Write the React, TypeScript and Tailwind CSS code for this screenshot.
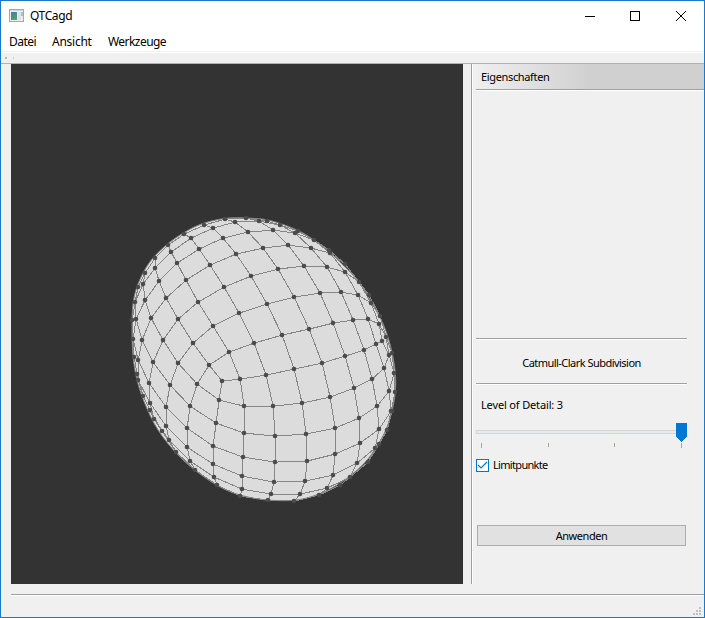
import React from "react";

type Pt = [number, number];

// Grid rows of the upper face, from the front corner towards the back.
const upper: Pt[][] = [
  [[222,381],[240,379],[266,375],[294,369],[322,363],[345,356],[364,350],[376,344],[382,341]],
  [[209,365],[229,352],[254,343],[282,335],[309,329],[333,323],[353,320],[368,319],[379,324]],
  [[193,343],[213,326],[239,313],[267,304],[294,297],[320,293],[341,292],[358,295],[371,303]],
  [[178,319],[198,302],[224,287],[251,276],[278,269],[304,266],[327,267],[345,272],[359,282]],
  [[166,298],[186,280],[210,265],[236,254],[263,248],[288,245],[311,248],[330,253],[345,264]],
  [[159,281],[177,263],[199,249],[223,238],[248,232],[273,230],[295,233],[314,240],[329,250]],
  [[155,268],[171,252],[191,238],[213,228],[235,222],[259,221],[280,225],[298,231],[314,240]],
  [[155,258],[168,245],[184,234],[204,225],[225,219],[246,218],[267,221],[280,225],[298,231]],
];

// Columns of the left face, starting at its lower seam.
const left: Pt[][] = [
  [[222,381],[209,365],[193,343],[178,319],[166,298],[159,281],[155,268],[155,258]],
  [[219,400],[197,384],[178,363],[163,340],[151,318],[145,300],[143,284],[145,273]],
  [[216,423],[190,406],[170,385],[153,362],[142,340],[136,319],[135,302],[138,287]],
  [[213,446],[187,428],[166,407],[149,383],[138,360],[133,339],[132,320],[135,302]],
  [[213,464],[187,447],[166,426],[150,403],[138,380],[134,357],[133,339],[132,320]],
  [[214,477],[190,461],[169,440],[154,419],[143,396],[137,374],[134,357],[133,339]],
  [[217,485],[195,470],[176,452],[162,431],[150,410],[143,396],[137,374],[134,357]],
];

// Rows of the lower face, starting at the upper seam.
const lower: Pt[][] = [
  [[222,381],[240,379],[266,375],[294,369],[322,363],[345,356],[364,350],[376,344],[382,341]],
  [[219,400],[244,406],[273,406],[302,403],[330,397],[354,388],[372,379],[384,368],[389,355]],
  [[216,423],[244,433],[275,436],[306,434],[335,428],[359,418],[377,406],[389,391],[394,373]],
  [[213,446],[243,457],[275,462],[307,461],[335,454],[360,443],[379,429],[391,411],[395,392]],
  [[213,464],[242,476],[274,482],[305,481],[333,475],[357,463],[375,448],[387,430],[392,411]],
  [[214,477],[242,489],[271,494],[300,494],[327,488],[350,477],[368,462],[379,444],[387,430]],
  [[217,485],[240,496],[268,500],[294,501],[319,495],[340,485],[350,477],[368,462],[379,444]],
];

// Foreshortened columns along the right edge.
const right: Pt[][] = [
  [[382,341],[379,324],[371,303],[359,282],[345,264],[329,250],[314,240]],
  [[389,355],[386,337],[380,316],[369,295],[359,282],[345,264],[329,250]],
  [[394,373],[392,353],[386,337],[380,316],[369,295],[359,282],[345,264]],
];

const outline: Pt[] = [
  [132,330],[133,304],[138,284],[149,263],[164,247],[180,235],[200,224.5],[224,218.5],[246,218],
  [270,220.5],[298,230.5],[318,243],[337,259],[358,281],[372,303],[384,326],[391,348],[395,370],
  [395.5,390],[392,411],[384,434],[368,459],[348,477.5],[325,491.5],[300,499.5],[275,500.5],[250,497.5],
  [225,489.5],[200,474],[178,455],[158,430],[145,404],[137,380],[133,356],
];

function smoothClosed(p: Pt[]): string {
  const n = p.length;
  let d = `M${p[0][0]} ${p[0][1]}`;
  for (let i = 0; i < n; i++) {
    const a = p[(i + n - 1) % n], b = p[i], c = p[(i + 1) % n], e = p[(i + 2) % n];
    d += `C${b[0] + (c[0] - a[0]) / 6} ${b[1] + (c[1] - a[1]) / 6} ${c[0] - (e[0] - b[0]) / 6} ${c[1] - (e[1] - b[1]) / 6} ${c[0]} ${c[1]}`;
  }
  return d + "Z";
}

function gridPath(grid: Pt[][]): string {
  const line = (l: Pt[]) => "M" + l.map((q) => q.join(" ")).join("L");
  const across = grid[0].map((_, j) => line(grid.map((r) => r[j])));
  return grid.map(line).join("") + across.join("");
}

const faces = [upper, left, lower, right];
const vertices = Array.from(new Set(faces.flat(2).map((p) => p.join(",")))).map(
  (s) => s.split(",").map(Number) as Pt,
);

function Mesh() {
  return (
    <svg className="block h-full w-full" viewBox="11 64 452 520">
      <path d={smoothClosed(outline)} fill="#dcdcdc" stroke="#808080" strokeWidth="1" />
      <g fill="none" stroke="#868686" shapeRendering="crispEdges" transform="translate(.1 .1)">
        {faces.map((f, i) => <path key={i} d={gridPath(f)} />)}
      </g>
      <g fill="#4b4b4b">
        {vertices.map(([x, y]) => <circle key={`${x},${y}`} cx={x} cy={y} r="2.3" />)}
      </g>
    </svg>
  );
}

function Rule() {
  return <div className="h-[2px] w-[211px] border-b border-white bg-[#a0a0a0]" />;
}

function TitleBar() {
  return (
    <div className="flex h-[29px] items-center bg-white pl-2">
      <svg className="h-[14px] w-[16px]" viewBox="0 0 16 14" shapeRendering="crispEdges">
        <defs>
          <linearGradient id="pane" x1="0" y1="0" x2="0.4" y2="1">
            <stop offset="0" stopColor="#4c7d9a" />
            <stop offset="1" stopColor="#48a078" />
          </linearGradient>
        </defs>
        <rect x=".5" y=".5" width="14" height="12" fill="#eeeeee" stroke="#a4a8ac" />
        <rect x="1" y="1" width="13" height="1" fill="#d4d8dc" />
        <rect x="2" y="3" width="6" height="8" fill="url(#pane)" />
        <rect x="9" y="3" width="3" height="8" fill="#dfe2e5" />
        <rect x="12" y="3" width="2" height="4" fill="#9fc7c9" />
      </svg>
      <span className="ml-[5px] text-[12px] leading-4 tracking-[-0.4px]">QTCagd</span>
      <svg className="ml-auto h-[12px] w-[103px]" viewBox="584 9 103 12" fill="none" stroke="#000">
        <path d="M585 15.5h10M630.5 10.5h9v9h-9z" shapeRendering="crispEdges" />
        <path d="M676 10l10 10M686 10l-10 10" />
      </svg>
      <div className="w-[17px]" />
    </div>
  );
}

export default function App() {
  return (
    <div className="flex h-[618px] w-[705px] flex-col overflow-hidden border border-[#1979ca] bg-[#f0f0f0] font-['Noto_Sans',sans-serif] text-black">
      <TitleBar />
      <div className="flex h-[21px] items-center bg-white pt-[2px] pl-2 text-[12px] leading-4">
        <span className="w-[43px] tracking-[-0.5px]">Datei</span>
        <span className="w-[56px] tracking-[-0.25px]">Ansicht</span>
        <span className="tracking-[-0.55px]">Werkzeuge</span>
      </div>
      <div className="h-[2px] border-b border-white bg-[#f0f0f0]" />
      <div className="flex h-[11px] gap-[6px] border-b border-[#b2b2b2] pt-[4px] pl-[4px]">
        <div className="h-[2px] w-[2px] bg-[#b8b8b8]" />
        <div className="h-[2px] w-px bg-[#d0d0d0]" />
      </div>
      <div className="flex h-[520px]">
        <div className="ml-[10px] h-full w-[452px] bg-[#333333]"><Mesh /></div>
        <div className="ml-[8px] w-[2px] border-r border-white bg-[#a0a0a0]" />
        <div className="flex flex-1 flex-col text-[11px] leading-4">
          <div className="h-[27px] bg-[linear-gradient(90deg,#f0f0f0,#d0d0d0_118px)] pl-[3px]">
            <div className="h-[26px] border-b border-[#a0a0a0] pt-[5px] pl-[5px]">
              <span className="tracking-[-0.35px]">Eigenschaften</span>
            </div>
            <div className="h-px bg-white" />
          </div>
          <div className="flex flex-col pl-[3px]">
            <div className="h-[247px]" />
            <Rule />
            <div className="flex h-[43px] w-[211px] items-center justify-center pt-[2px] tracking-[-0.53px]">Catmull-Clark Subdivision</div>
            <Rule />
            <div className="h-[38px] pt-[12px] pl-[5px] tracking-[-0.15px]">Level of Detail: 3</div>
            <svg className="h-[25px] w-[212px] shrink-0" viewBox="476 423 212 25" shapeRendering="crispEdges">
              <rect x="476.5" y="430.5" width="209" height="3" fill="#e7eaea" stroke="#d6d6d6" />
              <path d="M676 423h11v13.5l-5.5 5.5l-5.5-5.5z" fill="#0078d7" />
              <path d="M481.5 443v5M548.5 443v4M614.5 443v4M681.5 443v5" stroke="#a7a79b" />
            </svg>
            <div className="mt-[9px] flex h-[16px] items-center">
              <svg className="h-[13px] w-[13px]" viewBox="0 0 13 13" fill="none" stroke="#0078d7">
                <rect x=".5" y=".5" width="12" height="12" fill="#fff" />
                <path d="M2 6l3 3l6-6" strokeWidth="1.2" />
              </svg>
              <span className="ml-[4px] tracking-[-0.68px]">Limitpunkte</span>
            </div>
            <button className="mt-[52px] ml-px h-[21px] w-[209px] border border-[#adadad] bg-[#e1e1e1] leading-[18px] tracking-[-0.45px]">Anwenden</button>
          </div>
        </div>
      </div>
      <div className="mt-[10px] ml-[10px] h-[2px] border-b border-white bg-[#a0a0a0]" />
      <div className="flex flex-1 items-end justify-end pr-[3px] pb-[2px]">
        <svg className="h-[8px] w-[8px]" viewBox="0 0 8 8" fill="#bfbfbf" shapeRendering="crispEdges">
          <path d="M6 0h2v2h-2zM3 3h2v2h-2zM6 3h2v2h-2zM0 6h2v2h-2zM3 6h2v2h-2zM6 6h2v2h-2z" />
        </svg>
      </div>
    </div>
  );
}
